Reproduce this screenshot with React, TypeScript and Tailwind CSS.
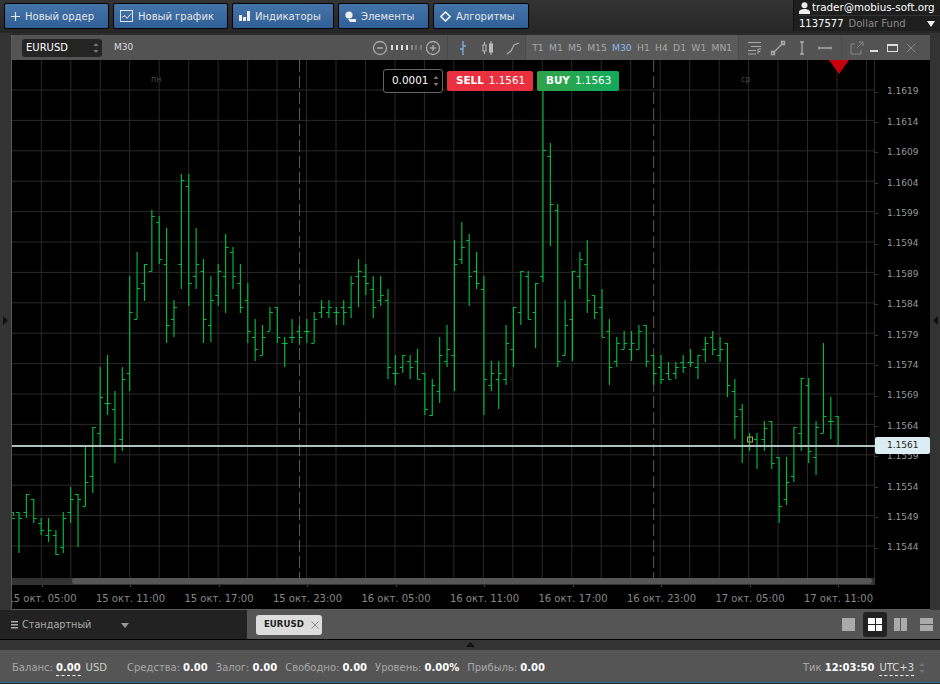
// Терминал: верхняя панель, окно графика EURUSD, нижняя строка счёта
const BARS: [number, number, number, number][] = [
  [512, 553, 512, 518], [494, 518, 512, 494], [499, 523, 499, 518], [518, 535, 523, 530],
  [518, 542, 535, 530], [530, 555, 535, 554], [512, 553, 547, 518], [487, 523, 512, 499],
  [494, 547, 494, 499], [445, 506, 506, 482], [427, 493, 476, 427], [367, 445, 433, 397],
  [355, 415, 403, 403], [391, 463, 409, 445], [367, 451, 439, 379], [276, 391, 373, 312],
  [252, 319, 319, 288], [264, 301, 283, 264], [210, 271, 271, 216], [216, 264, 222, 259],
  [228, 343, 264, 325], [300, 337, 319, 307], [174, 289, 264, 180], [174, 306, 186, 283],
  [228, 289, 276, 264], [259, 343, 271, 319], [276, 342, 325, 300], [264, 306, 295, 271],
  [234, 313, 276, 247], [247, 289, 252, 276], [264, 313, 283, 307], [283, 343, 300, 331],
  [319, 361, 337, 349], [325, 355, 355, 337], [307, 331, 331, 312], [307, 343, 307, 337],
  [337, 367, 343, 343], [319, 343, 337, 337], [325, 345, 331, 337], [319, 343, 331, 331],
  [312, 343, 343, 319], [300, 318, 312, 307], [300, 318, 312, 307], [307, 325, 312, 312],
  [300, 325, 307, 312], [276, 318, 307, 283], [259, 307, 276, 271], [264, 295, 276, 283],
  [276, 318, 289, 307], [276, 306, 300, 295], [289, 379, 300, 367], [355, 385, 373, 373],
  [355, 373, 367, 355], [355, 379, 361, 367], [349, 379, 361, 379], [373, 415, 373, 409],
  [379, 416, 415, 385], [337, 403, 391, 355], [325, 367, 361, 349], [240, 391, 355, 264],
  [222, 264, 259, 247], [234, 306, 240, 276], [252, 289, 271, 283], [276, 415, 289, 379],
  [361, 391, 385, 373], [361, 409, 379, 373], [325, 385, 379, 343], [307, 367, 349, 307],
  [271, 325, 312, 271], [271, 319, 276, 319], [283, 348, 312, 283], [85, 282, 276, 150],
  [143, 246, 156, 204], [204, 367, 210, 361], [300, 355, 355, 325], [271, 361, 319, 271],
  [252, 289, 276, 259], [240, 313, 264, 300], [295, 319, 295, 312], [289, 337, 307, 337],
  [319, 385, 331, 367], [337, 367, 361, 343], [331, 349, 349, 343], [331, 361, 349, 343],
  [325, 349, 349, 331], [325, 367, 325, 361], [355, 385, 355, 373], [355, 384, 367, 379],
  [362, 379, 373, 379], [362, 379, 373, 367], [355, 373, 362, 367], [349, 367, 362, 362],
  [355, 379, 367, 355], [337, 362, 349, 343], [331, 355, 337, 349], [337, 362, 355, 349],
  [343, 397, 343, 385], [379, 439, 391, 416], [404, 463, 409, 445], [433, 451, 445, 445],
  [433, 469, 439, 445], [421, 451, 439, 428], [421, 469, 421, 463], [457, 523, 457, 506],
  [457, 505, 499, 482], [427, 482, 476, 427], [378, 451, 433, 378], [378, 463, 385, 451],
  [421, 475, 457, 427], [343, 433, 433, 416], [397, 439, 421, 421], [416, 445, 416, 445],
];

const VLINES = Array.from({ length: 29 }, (_, i) => 41.3 + 29.47 * i);
const HLINES = Array.from({ length: 16 }, (_, i) => 90 + 30.4 * i);
const PRICES = Array.from({ length: 16 }, (_, i) => (1.1619 - 0.0005 * i).toFixed(4));
const TIMES = [
  "15 окт. 05:00", "15 окт. 11:00", "15 окт. 17:00", "15 окт. 23:00", "16 окт. 05:00",
  "16 окт. 11:00", "16 окт. 17:00", "16 окт. 23:00", "17 окт. 05:00", "17 окт. 11:00",
];
const FRAMES = ["T1", "M1", "M5", "M15", "M30", "H1", "H4", "D1", "W1", "MN1"];

function Chart() {
  return (
    <svg width="863" height="518" viewBox="12 60 863 518" className="block">
      <rect x="12" y="60" width="863" height="518" fill="#000" />
      {VLINES.map((x) => (
        <line key={x} x1={x} x2={x} y1="60" y2="578" stroke="#2a2a2a" strokeWidth="1" />
      ))}
      {HLINES.map((y) => (
        <line key={y} x1="12" x2="875" y1={y} y2={y} stroke="#2a2a2a" strokeWidth="1" />
      ))}
      <line x1="874.5" x2="874.5" y1="60" y2="578" stroke="#2a2a2a" />
      <line x1="299.5" x2="299.5" y1="60" y2="578" stroke="#5a5a5a" strokeDasharray="12 4" />
      <line x1="653.7" x2="653.7" y1="60" y2="578" stroke="#5a5a5a" strokeDasharray="12 4" />
      <path d="M12 512.5H13M12 518.5H15M13.5 512V516" stroke="#00b03a" fill="none" />
      {BARS.map(([hi, lo, open, close], i) => {
        const x = 19 + 7.38 * i;
        return (
          <path
            key={i}
            d={`M${x} ${hi}V${lo}M${x - 3} ${open + 0.5}H${x}M${x} ${close + 0.5}H${x + 3}`}
            stroke="#00bb3c"
            strokeWidth="1.15"
            fill="none"
          />
        );
      })}
      <rect x="12" y="445" width="863" height="2" fill="#aec2c2" />
      <rect x="747.5" y="437" width="5" height="5" fill="none" stroke="#c79a3a" />
      <path d="M829 60H849L839 74Z" fill="#c8000f" />
    </svg>
  );
}

function Arrows({ className = "" }: { className?: string }) {
  return (
    <svg width="6" height="12" viewBox="0 0 6 12" className={className}>
      <path d="M3 1L5.5 4H.5ZM3 11L.5 8H5.5Z" fill="#777" />
    </svg>
  );
}

function TopButton({ icon, label, width }: { icon: React.ReactNode; label: string; width: string }) {
  return (
    <button
      className={`flex h-[26px] items-center gap-[5px] rounded-[2px] border border-black bg-gradient-to-b from-[#4474a8] to-[#2f5f96] pl-[6px] text-[10px] text-[#e6e6e6] ${width}`}
    >
      {icon}
      {label}
    </button>
  );
}

function ToolIcon({ d, stroke = "#aaa" }: { d: string; stroke?: string }) {
  return (
    <svg width="16" height="16" viewBox="0 0 16 16" fill="none">
      <path d={d} stroke={stroke} strokeWidth="1.3" />
    </svg>
  );
}

function Stat({ label, value }: { label: string; value: string }) {
  return (
    <span className="flex items-baseline gap-[3px]">
      <span className="text-[#a8a8a8]">{label}</span>
      <b className="text-white">{value}</b>
    </span>
  );
}

export default function App() {
  return (
    <div className="flex h-[684px] w-[940px] flex-col overflow-hidden bg-[#2b2b2b] font-['DejaVu_Sans',sans-serif]">
      <header className="flex h-[33px] items-start bg-gradient-to-b from-[#343434] to-[#262626]">
        <nav className="flex gap-1 pl-1 pt-[3px]">
          <TopButton
            width="w-[105px]"
            label="Новый ордер"
            icon={
              <svg width="9" height="9" viewBox="0 0 9 9">
                <path d="M4.5 0V9M0 4.5H9" stroke="#e6e6e6" strokeWidth="1.2" />
              </svg>
            }
          />
          <TopButton
            width="w-[115px]"
            label="Новый график"
            icon={
              <svg width="13" height="12" viewBox="0 0 13 12" fill="none">
                <rect x=".5" y=".5" width="12" height="11" stroke="#e6e6e6" />
                <path d="M2 7.5L5 5.5L7 8.5L11 3.5" stroke="#e6e6e6" />
              </svg>
            }
          />
          <TopButton
            width="w-[102px]"
            label="Индикаторы"
            icon={
              <svg width="11" height="10" viewBox="0 0 11 10" fill="#eee">
                <rect y="4" width="3" height="6" />
                <rect x="4" y="6" width="3" height="4" />
                <rect x="8" y="0" width="3" height="10" />
              </svg>
            }
          />
          <TopButton
            width="w-[91px]"
            label="Элементы"
            icon={
              <svg width="11" height="11" viewBox="0 0 11 11" fill="#eee">
                <circle cx="4" cy="4" r="3.6" />
                <path d="M3 8H11V11H5Z" />
              </svg>
            }
          />
          <TopButton
            width="w-[96px]"
            label="Алгоритмы"
            icon={
              <svg width="11" height="11" viewBox="0 0 11 11" fill="none">
                <path d="M5.5 1L10 5.5L5.5 10L1 5.5Z" stroke="#eee" strokeWidth="1.6" />
              </svg>
            }
          />
        </nav>
        <div className="ml-auto h-[31px] w-[147px] whitespace-nowrap border-l border-[#111] bg-[#1e1e1e] pl-[5px] text-[10.3px] leading-[15px]">
          <div className="flex items-center gap-[2px] text-white">
            <svg width="11" height="12" viewBox="0 0 11 12" fill="#eee">
              <circle cx="5.5" cy="3.2" r="3" />
              <path d="M0 12V10C0 8 3 7 5.5 7S11 8 11 10V12Z" />
            </svg>
            trader@mobius-soft.org
          </div>
          <div className="flex items-center gap-[5px] border-t border-[#333] text-[10px]">
            <span className="text-white">1137577</span>
            <span className="text-[#8a8a8a]">Dollar Fund</span>
            <svg width="8" height="6" viewBox="0 0 8 6" className="ml-auto mr-[5px]">
              <path d="M0 0H8L4 6Z" fill="#eee" />
            </svg>
          </div>
        </div>
      </header>

      <main className="flex h-[577px]">
        <aside className="flex w-[11px] items-center bg-[#333]">
          <svg width="6" height="9" viewBox="0 0 6 9" className="ml-[3px] mt-[-2px]">
            <path d="M0 0L5 4.5L0 9Z" fill="#111" />
          </svg>
        </aside>

        <section className="mt-[2px] flex w-[919px] flex-col border-b border-l border-[#5c5c5c]">
          <div className="flex h-[25px] items-center bg-[#535353] text-[9.2px] text-[#a8a8a8]">
            <div className="ml-[10px] flex h-[18px] w-[80px] items-center justify-between rounded-[3px] bg-[#242424] pl-1 pr-[3px] text-[10px] text-white">
              EURUSD
              <Arrows />
            </div>
            <span className="ml-[12px] text-[9px] text-[#ddd]">M30</span>
            <div className="ml-[239px] flex items-center gap-[3px]">
              <ToolIcon d="M8 1.5A6.5 6.5 0 1 0 8 14.5A6.5 6.5 0 1 0 8 1.5M5 8H11" />
              <span className="flex h-[6px] w-[31px] items-center justify-between">
                <i className="h-[5px] w-[2px] bg-[#ddd]" />
                <i className="h-[5px] w-[2px] bg-[#ddd]" />
                <i className="h-[5px] w-[2px] bg-[#ddd]" />
                <i className="h-[5px] w-[2px] bg-[#ddd]" />
                <i className="h-[5px] w-[2px] bg-[#888]" />
                <i className="h-[5px] w-[2px] bg-[#777]" />
                <i className="h-[5px] w-[2px] bg-[#777]" />
              </span>
              <ToolIcon d="M8 1.5A6.5 6.5 0 1 0 8 14.5A6.5 6.5 0 1 0 8 1.5M5 8H11M8 5V11" />
            </div>
            <div className="ml-[6px] flex h-full items-center gap-[9px] border-l border-[#4a4a4a] pl-[7px]">
              <ToolIcon d="M8 1V15M5 9H8M8 6H11" stroke="#7db0e6" />
              <svg width="16" height="16" viewBox="0 0 16 16" fill="none" stroke="#bbb">
                <path d="M4.5 2V14M11 1V15" />
                <rect x="3" y="5" width="3" height="6" fill="#535353" />
                <rect x="9.5" y="4" width="3" height="8" fill="#bbb" />
              </svg>
              <ToolIcon d="M2 14L6 11L9 5L14 3" />
            </div>
            <div className="ml-[4px] flex h-full w-[214px] items-center justify-between border-x border-[#4a4a4a] bg-[#5a5a5a] px-[6px]">
              {FRAMES.map((f) => (
                <span key={f} className={f === "M30" ? "text-[#8cb8e8]" : ""}>
                  {f}
                </span>
              ))}
            </div>
            <div className="flex h-full w-[102px] items-center justify-around px-1">
              <svg width="15" height="14" viewBox="0 0 15 14" fill="none" stroke="#aaa">
                <path d="M1 1.5H14M4 5.5H14M1 9.5H9M1 13H9M11 13V8H14M11 10.5H13.5" />
              </svg>
              <ToolIcon d="M3 13L13 3M1.5 11.5H4.5V14.5H1.5ZM11.5 1.5H14.5V4.5H11.5Z" />
              <ToolIcon d="M8 2V14M6 2H10M6 14H10" />
              <ToolIcon d="M2 8H14M2 6.5V9.5M14 6.5V9.5" />
            </div>
            <div className="flex h-full flex-1 items-center gap-[6px] border-l border-[#4a4a4a] pl-[8px]">
              <svg width="14" height="14" viewBox="0 0 14 14" fill="none" stroke="#888">
                <path d="M9 1H13V5M13 1L7 7M5 3H1V13H11V9" />
              </svg>
              <span className="mt-[6px] h-[2px] w-[8px] bg-[#ddd]" />
              <span className="ml-[3px] h-[8px] w-[11px] border border-t-2 border-[#ddd]" />
              <svg width="10" height="10" viewBox="0 0 10 10" className="ml-[2px]">
                <path d="M1 1L9 9M9 1L1 9" stroke="#888" />
              </svg>
            </div>
          </div>

          <div className="flex">
            <div className="relative w-[863px]">
              <Chart />
              <span className="absolute left-[139px] top-[14px] text-[8px] text-[#4a4a4a]">пн</span>
              <span className="absolute left-[729px] top-[14px] text-[8px] text-[#4a4a4a]">ср</span>
              <div className="absolute left-[371px] top-[9px] flex items-center gap-1 text-[10.4px] text-white">
                <div className="flex h-[24px] w-[60px] items-center justify-between rounded-[3px] border border-[#666] bg-black pl-2 pr-[3px]">
                  0.0001
                  <Arrows />
                </div>
                <div className="flex h-[20px] w-[86px] items-center gap-[5px] rounded-[2px] bg-[#e8303e] pl-[9px]">
                  <b>SELL</b>1.1561
                </div>
                <div className="flex h-[20px] w-[82px] items-center gap-[5px] rounded-[2px] bg-gradient-to-r from-[#30a248] to-[#0fab5c] pl-[9px]">
                  <b>BUY</b>1.1563
                </div>
              </div>
              <div className="h-[7px] bg-[#333] pl-[60px]">
                <div className="h-[6px] w-[800px] rounded-[3px] bg-[#565656]" />
              </div>
            </div>
            <div className="relative w-[55px] bg-black pt-[17px] text-[9px] text-[#999]">
              {PRICES.map((p) => (
                <div key={p} className="flex h-[30.4px] items-center">
                  <i className="h-px w-[3px] bg-[#333]" />
                  <span className="ml-[9px]">{p}</span>
                </div>
              ))}
              <div className="absolute left-0 top-[377px] flex h-[17px] w-[55px] items-center rounded-[2px] bg-[#dceef3] pl-[12px] font-medium text-[#222]">
                1.1561
              </div>
            </div>
          </div>

          <div className="flex flex-1 overflow-hidden bg-black text-[10px] text-[#888]">
            <div className="ml-[-14.25px] flex">
              {TIMES.map((t) => (
                <div key={t} className="flex w-[88.5px] shrink-0 flex-col items-center">
                  <i className="h-[2px] w-px bg-[#444]" />
                  <span className="mt-[4px] whitespace-nowrap">{t}</span>
                </div>
              ))}
            </div>
          </div>
        </section>

        <aside className="flex w-[10px] items-center justify-end bg-[#333]">
          <svg width="6" height="9" viewBox="0 0 6 9" className="mr-[1px] mt-[-2px]">
            <path d="M5 0L0 4.5L5 9Z" fill="#111" />
          </svg>
        </aside>
      </main>

      <div className="flex h-[30px] border-b border-black">
        <div className="flex w-[247px] items-center bg-[#222] pl-[11px] pt-[1px] text-[9.7px] text-[#aaa]">
          <svg width="7" height="8" viewBox="0 0 7 8" fill="#aaa">
            <path d="M0 0H7V1.5H0ZM0 3H7V4.5H0ZM0 6H7V7.5H0Z" />
          </svg>
          <span className="ml-1">Стандартный</span>
          <svg width="8" height="5" viewBox="0 0 8 5" className="ml-[30px]">
            <path d="M0 0H8L4 5Z" fill="#999" />
          </svg>
        </div>
        <div className="flex flex-1 items-center bg-[#555] pl-[9px] pr-[7px]">
          <div className="flex h-[20px] w-[66px] items-center gap-[7px] rounded-[3px] bg-[#ddd] pl-2 text-[8.6px] font-bold text-[#222]">
            EURUSD
            <svg width="8" height="8" viewBox="0 0 8 8">
              <path d="M0.5 0.5L7.5 7.5M7.5 0.5L0.5 7.5" stroke="#888" />
            </svg>
          </div>
          <div className="ml-auto flex items-center">
            <span className="h-[13px] w-[13px] bg-[#aaa]" />
            <span className="ml-[8px] grid h-[25px] w-[24px] grid-cols-2 gap-px rounded-[3px] bg-[#222] px-[5px] py-[6px]">
              <i className="bg-white" />
              <i className="bg-white" />
              <i className="bg-white" />
              <i className="bg-white" />
            </span>
            <span className="ml-[7px] grid h-[13px] w-[13px] grid-cols-2 gap-px">
              <i className="bg-[#aaa]" />
              <i className="bg-[#aaa]" />
            </span>
            <span className="ml-[13px] grid h-[13px] w-[13px] grid-rows-2 gap-px">
              <i className="bg-[#aaa]" />
              <i className="bg-[#aaa]" />
            </span>
          </div>
        </div>
      </div>

      <div className="flex h-[10px] justify-center bg-[#333] pt-[2px]">
        <svg width="9" height="5" viewBox="0 0 9 5">
          <path d="M4.5 0L9 5H0Z" fill="#111" />
        </svg>
      </div>

      <footer className="flex h-[33px] items-center border-b border-[#2a6a90] bg-[#555] pl-[12px] pr-[15px] pt-[3px] text-[10px]">
        <span className="flex items-baseline gap-[3px]">
          <span className="text-[#a8a8a8]">Баланс:</span>
          <b className="border-b border-dashed border-white text-white">0.00</b>
          <span className="ml-[2px] text-[#ccc]">USD</span>
        </span>
        <div className="ml-[20px] flex gap-[8px]">
          <Stat label="Средства:" value="0.00" />
          <Stat label="Залог:" value="0.00" />
          <Stat label="Свободно:" value="0.00" />
          <Stat label="Уровень:" value="0.00%" />
          <Stat label="Прибыль:" value="0.00" />
        </div>
        <span className="ml-auto flex items-center gap-[5px]">
          <Stat label="Тик" value="12:03:50" />
          <span className="border-b border-dashed border-white text-[#ddd]">UTC+3</span>
          <Arrows />
        </span>
      </footer>
    </div>
  );
}
